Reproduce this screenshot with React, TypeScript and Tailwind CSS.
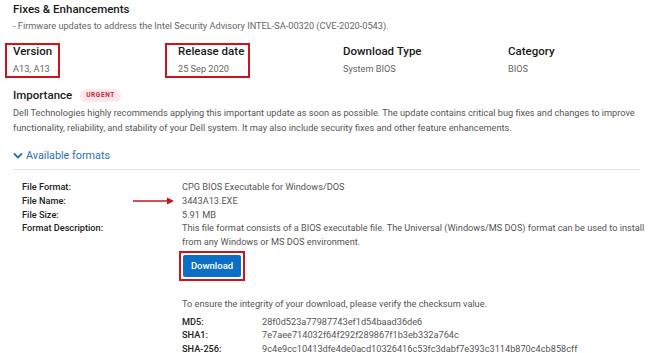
import React from 'react';

const meta = [
  { label: 'Version', value: 'A13, A13', box: 'version' },
  { label: 'Release date', value: '25 Sep 2020', box: 'date' },
  { label: 'Download Type', value: 'System BIOS', box: '' },
  { label: 'Category', value: 'BIOS', box: '' },
];

const fileRows = [
  ['File Format:', 'CPG BIOS Executable for Windows/DOS'],
  ['File Name:', '3443A13.EXE'],
  ['File Size:', '5.91 MB'],
];

const checksums = [
  ['MD5:', '28f0d523a77987743ef1d54baad36de6'],
  ['SHA1:', '7e7aee714032f64f292f289867f1b3eb332a764c'],
  ['SHA-256:', '9c4e9cc10413dfe4de0acd10326416c53fc3dabf7e393c3114b870c4cb858cff'],
];

const App: React.FC = () => {
  return (
    <div
      className="w-[650px] h-[353px] overflow-hidden bg-white px-[13px] text-[#444]"
      style={{ fontFamily: 'Roboto, "Noto Sans", sans-serif' }}
    >
      <h2 className="pt-[2px] text-[11.5px] leading-[14px] font-medium text-[#1a1a1a]">Fixes &amp; Enhancements</h2>
      <p className="mt-[3px] text-[9.2px] leading-[13px] text-[#666]">
        - Firmware updates to address the Intel Security Advisory INTEL-SA-00320 (CVE-2020-0543).
      </p>

      {/* meta columns */}
      <div className="mt-[12px] grid grid-cols-[165px_165px_165px_1fr]">
        {meta.map((m) => (
          <div key={m.label} className="relative">
            {m.box === 'version' && (
              <div className="absolute -left-[8px] -top-[1px] w-[55px] h-[35px] border-2 border-[#d0121b]" />
            )}
            {m.box === 'date' && (
              <div className="absolute -left-[13px] -top-[1px] w-[85px] h-[35px] border-2 border-[#d0121b]" />
            )}
            <div className="text-[11.5px] leading-[14px] font-medium text-[#1a1a1a]">{m.label}</div>
            <div className="mt-[4px] text-[9.2px] leading-[13px] text-[#666]">{m.value}</div>
          </div>
        ))}
      </div>

      {/* importance */}
      <div className="mt-[13px] flex items-center gap-[8px]">
        <span className="text-[11.5px] leading-[14px] font-medium text-[#1a1a1a]">Importance</span>
        <span className="rounded-full bg-[#fde7ea] px-[6px] text-[6.5px] leading-[13px] font-bold tracking-[0.6px] text-[#c8283c]">
          URGENT
        </span>
      </div>
      <div className="mt-[3px] text-[9.2px] leading-[15px] text-[#555] whitespace-nowrap">
        <div>Dell Technologies highly recommends applying this important update as soon as possible. The update contains critical bug fixes and changes to improve</div>
        <div>functionality, reliability, and stability of your Dell system. It may also include security fixes and other feature enhancements.</div>
      </div>

      <div className="mt-[14px] flex items-center gap-[3px] text-[#2b6fbd]">
        <svg width="10" height="10" viewBox="0 0 10 10" fill="none">
          <path d="M1.5 3l3.5 3.5L8.5 3" stroke="currentColor" strokeWidth="1.8" strokeLinecap="round" strokeLinejoin="round" />
        </svg>
        <span className="text-[10.8px] leading-[14px]">Available formats</span>
      </div>
      <div className="mt-[6px] mr-[-3px] border-t border-[#e3e3e3]" />

      {/* file details */}
      <div className="mt-[10px] pl-[9px] text-[9.2px] leading-[13.75px]">
        {fileRows.map(([k, v]) => (
          <div key={k} className="flex">
            <div className="w-[160px] shrink-0 font-medium text-[#222]">{k}</div>
            <div className="relative text-[#555]">
              {k === 'File Name:' && (
                <svg className="absolute -left-[49px] top-[3px]" width="42" height="8" viewBox="0 0 42 8">
                  <line x1="0" y1="4" x2="36" y2="4" stroke="#d0121b" strokeWidth="1.5" />
                  <path d="M34 0.5L41 4L34 7.5z" fill="#d0121b" />
                </svg>
              )}
              {v}
            </div>
          </div>
        ))}
        <div className="flex">
          <div className="w-[160px] shrink-0 font-medium text-[#222]">Format Description:</div>
          <div className="text-[#555] whitespace-nowrap">
            <div>This file format consists of a BIOS executable file. The Universal (Windows/MS DOS) format can be used to install</div>
            <div>from any Windows or MS DOS environment.</div>
          </div>
        </div>

        <div className="mt-[2px] ml-[157px] inline-flex border-2 border-[#d0121b] p-[2px]">
          <button className="h-[22px] w-[58px] rounded-[2px] bg-[#0b6fc6] text-[9.5px] font-medium text-white">
            Download
          </button>
        </div>

        <div className="mt-[16px] ml-[160px] text-[#555]">
          <div>To ensure the integrity of your download, please verify the checksum value.</div>
          <div className="mt-[4px]">
            {checksums.map(([k, v]) => (
              <div key={k} className="flex">
                <div className="w-[80px] shrink-0 font-medium text-[#222]">{k}</div>
                <div>{v}</div>
              </div>
            ))}
          </div>
        </div>
      </div>
    </div>
  );
};

export default App;
